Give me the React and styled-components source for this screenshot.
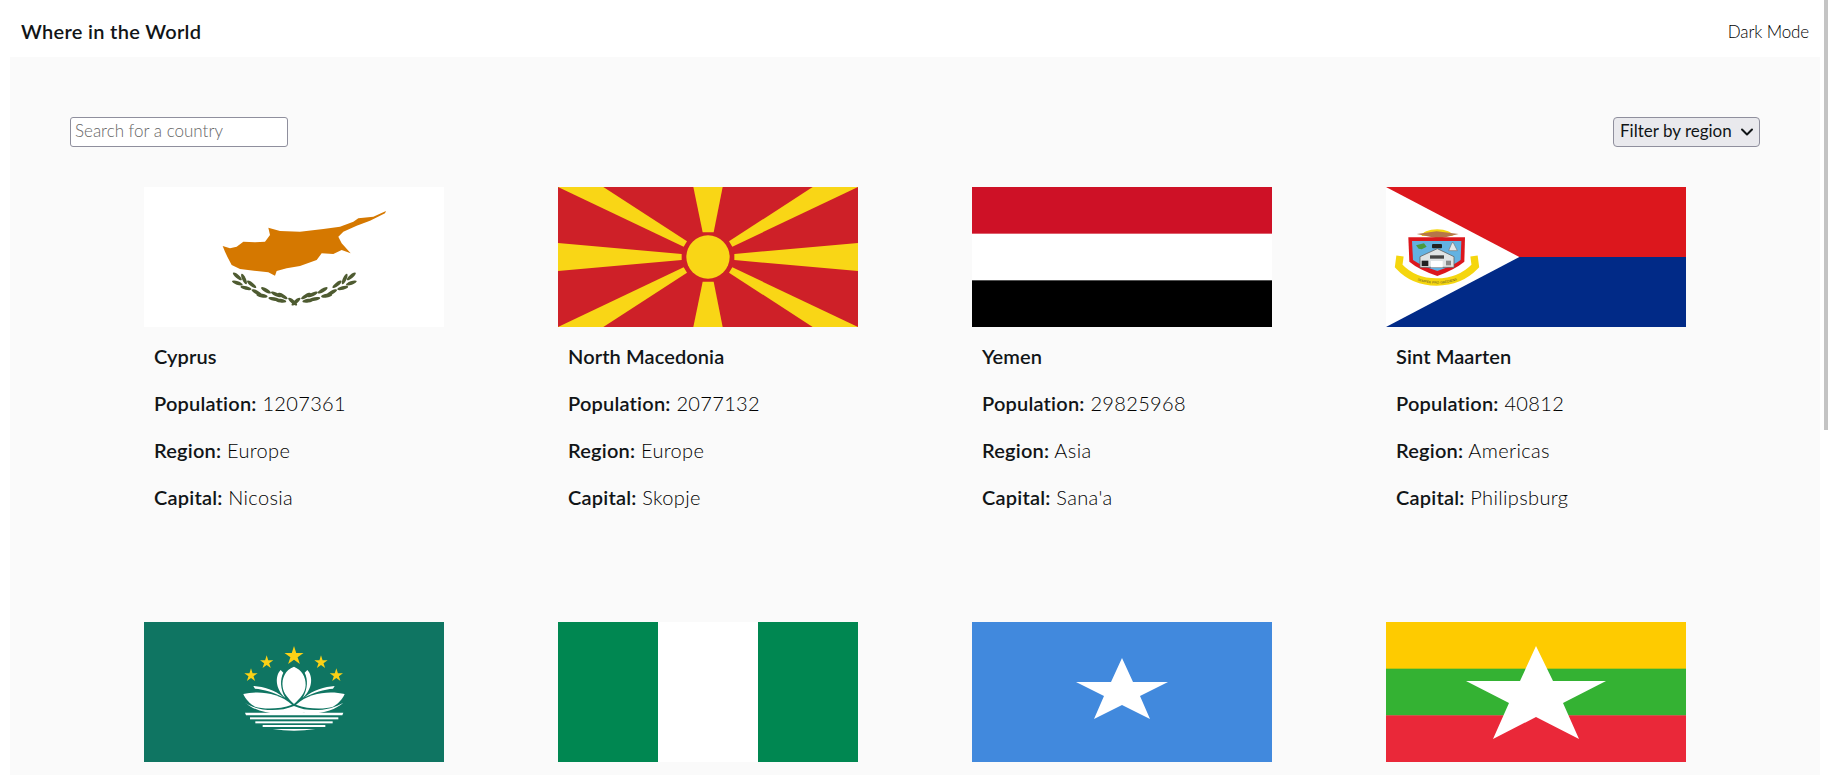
import React from 'react';
import styled, { createGlobalStyle } from 'styled-components';
import { ChevronDown } from 'lucide-react';

const GlobalStyle = createGlobalStyle`
  html, body {
    margin: 0;
    height: 100%;
    overflow: hidden;
    background: #fff;
  }
  body {
    font-family: 'Lato', 'Open Sans', sans-serif;
    color: #111517;
  }
`;

const Page = styled.div`
  margin: 0 10px;
  height: 100vh;
  display: flex;
  flex-direction: column;
`;

const Header = styled.header`
  box-sizing: border-box;
  height: 57px;
  flex: none;
  padding: 5px 11px 0;
  display: flex;
  align-items: center;
  justify-content: space-between;
`;

const Brand = styled.h1`
  margin: 0;
  font-size: 20px;
  font-weight: 600;
  letter-spacing: 0.3px;
`;

const ThemeToggle = styled.span`
  font-size: 17px;
  font-weight: 300;
  color: #000;
  letter-spacing: -0.15px;
`;

const Main = styled.main`
  flex: 1;
  min-height: 0;
  overflow: hidden;
  background: #fafafa;
  padding: 60px;
`;

const Toolbar = styled.div`
  display: flex;
  justify-content: space-between;
  margin-bottom: 40px;
`;

const SearchInput = styled.input`
  box-sizing: border-box;
  width: 218px;
  height: 30px;
  padding: 0 3px 3px 4px;
  border: 1px solid #8f8f9d;
  border-radius: 3px;
  background: #fff;
  font-family: inherit;
  font-size: 17px;
  font-weight: 300;

  &::placeholder {
    color: #666;
    opacity: 1;
  }
`;

const SelectWrap = styled.div`
  position: relative;
  width: 147px;
  height: 30px;

  svg {
    position: absolute;
    right: 3px;
    top: 5px;
    pointer-events: none;
  }
`;

const RegionSelect = styled.select`
  appearance: none;
  box-sizing: border-box;
  width: 100%;
  height: 100%;
  padding: 0 0 3px 6px;
  border: 1px solid #8f8f9d;
  border-radius: 4px;
  background: #e9e9ed;
  color: #111517;
  font-family: inherit;
  font-size: 17px;
  font-weight: 400;
`;

const Grid = styled.div`
  display: grid;
  grid-template-columns: repeat(4, 300px);
  justify-content: center;
  column-gap: 114px;
`;

const Card = styled.article`
  height: 435px;
`;

const Flag = styled.svg`
  display: block;
  width: 300px;
  height: 140px;
`;

const Info = styled.div`
  padding: 16px 10px 0;
`;

const Name = styled.h2`
  margin: 0 0 20px;
  font-size: 20px;
  line-height: 27px;
  font-weight: 600;
  letter-spacing: 0.1px;
`;

const Line = styled.p`
  margin: 0 0 20px;
  font-size: 20px;
  line-height: 27px;
  font-weight: 300;
  color: #000;
  letter-spacing: 0.35px;
`;

const Label = styled.b`
  font-weight: 600;
  color: #111517;
  letter-spacing: 0.2px;
`;

const ScrollThumb = styled.div`
  position: fixed;
  top: 0;
  right: 2px;
  width: 4px;
  height: 430px;
  background: #c4c4c4;
`;

const Cyprus = () => {
  const leaves = [
    [292, 274, 40], [292, 294, 20], [312, 282, 65], [335, 298, 38], [318, 309, 14],
    [350, 322, 28], [378, 316, 30], [366, 332, 10], [408, 328, 25], [402, 342, 10],
    [428, 333, 30], [422, 347, 8], [458, 350, 40],
  ];
  return (
    <Flag viewBox="12 6 900 420">
      <rect x="12" y="6" width="900" height="420" fill="#fff" />
      <path
        fill="#d57800"
        d="M248 183 L270 190 L290 185 L310 170 L345 172 L375 170 L390 150 L385 128 L420 138 L480 140 L550 132 L600 125 L640 110 L655 100 L700 95 L738 78 L735 85 L690 107 L650 122 L610 140 L595 155 L605 175 L632 205 L605 195 L580 207 L545 205 L530 225 L480 243 L440 250 L410 258 L405 272 L385 262 L350 258 L300 252 L275 240 L262 215 L255 200 Z"
      />
      <g fill="#4e5b31">
        {leaves.map(([x, y, r], i) => (
          <ellipse key={i} cx={x} cy={y} rx="17" ry="5.5" transform={`rotate(${r} ${x} ${y})`} />
        ))}
        {leaves.map(([x, y, r], i) => (
          <ellipse key={i} cx={926 - x} cy={y} rx="17" ry="5.5" transform={`rotate(${-r} ${926 - x} ${y})`} />
        ))}
      </g>
    </Flag>
  );
};

const Macedonia = () => (
  <Flag viewBox="24 21 900 420">
    <rect x="24" y="21" width="900" height="420" fill="#ce2028" />
    <g fill="#f9d616">
      <circle cx="474" cy="231" r="65" />
      <polygon points="430,21 518,21 491,157 458,157" />
      <polygon points="458,305 491,305 518,441 430,441" />
      <polygon points="24,189 395,222 395,240 24,273" />
      <polygon points="924,189 553,222 553,240 924,273" />
      <polygon points="24,21 160,21 411,184 401,200" />
      <polygon points="924,21 788,21 537,184 547,200" />
      <polygon points="24,441 160,441 411,278 401,262" />
      <polygon points="924,441 788,441 537,278 547,262" />
    </g>
  </Flag>
);

const Yemen = () => (
  <Flag viewBox="0 0 300 140">
    <rect width="300" height="47" fill="#ce1126" />
    <rect y="46.67" width="300" height="47" fill="#fff" />
    <rect y="93.33" width="300" height="46.67" fill="#000" />
  </Flag>
);

const SintMaarten = () => (
  <Flag viewBox="18 561 900 420">
    <rect x="18" y="561" width="900" height="210" fill="#dc171d" />
    <rect x="18" y="771" width="900" height="210" fill="#012a87" />
    <polygon points="18,561 418,771 18,981" fill="#fff" />
    <path d="M125 708 A46 20 0 0 1 218 708 Z" fill="#f5d60e" />
    <path d="M110 702 L170 694 L236 702 L178 716 Z" fill="#b5764a" />
    <path d="M60 768 L56 798 Q100 846 170 846 Q240 846 286 798 L282 768" fill="none" stroke="#f5d60e" strokeWidth="22" />
    <path id="sxm-motto" d="M52 800 Q100 851 170 851 Q240 851 292 800" fill="none" />
    <text fontFamily="'Liberation Sans', sans-serif" fontSize="10" fill="#5a5230">
      <textPath href="#sxm-motto" startOffset="50%" textAnchor="middle">SEMPER PRO GREDIENS</textPath>
    </text>
    <path d="M85 712 L255 712 L253 785 Q225 808 172 828 Q115 808 88 785 Z" fill="#dc171d" />
    <path d="M96 723 L244 723 L242 780 Q218 798 172 813 Q125 798 99 780 Z" fill="#63b2e2" />
    <path d="M108 736 L132 730 L140 740 L125 748 L116 746 Z" fill="#4a9a3c" />
    <path d="M206 752 L216 728 L220 728 L232 752 Z" fill="#e8e8e8" stroke="#777" strokeWidth="2" />
    <rect x="156" y="732" width="30" height="13" rx="3" fill="#222" />
    <path d="M120 770 L172 746 L222 770 L222 802 L120 802 Z" fill="#dfe3e4" stroke="#666" strokeWidth="2.5" />
    <rect x="150" y="766" width="42" height="10" fill="#444" />
    <rect x="125" y="782" width="20" height="16" fill="#222" />
    <rect x="198" y="782" width="15" height="14" fill="#888" />
    <rect x="153" y="783" width="35" height="19" fill="#fff" />
  </Flag>
);

function Star({ cx, cy, r }) {
  const points = [];
  for (let i = 0; i < 10; i++) {
    const radius = i % 2 === 0 ? r : r * 0.38;
    const angle = (Math.PI / 5) * i - Math.PI / 2;
    points.push(`${cx + radius * Math.cos(angle)},${cy + radius * Math.sin(angle)}`);
  }
  return <polygon points={points.join(' ')} />;
}

const Macau = () => (
  <Flag viewBox="-168 6 900 420">
    <rect x="-168" y="6" width="900" height="420" fill="#0f7562" />
    <g fill="#fbd116">
      <Star cx={282} cy={108} r={30} />
      <Star cx={200} cy={127} r={21} />
      <Star cx={363} cy={127} r={21} />
      <Star cx={153} cy={166} r={21} />
      <Star cx={409} cy={166} r={21} />
    </g>
    <g fill="#fff">
      <path d="M282 140 C255 150 245 175 248 200 C250 220 265 235 282 252 C300 235 316 220 317 195 C318 170 305 150 282 140 Z" />
      <path d="M242 150 C224 168 226 208 256 234 C240 205 240 178 250 158 Z" />
      <path d="M322 150 C340 168 338 208 308 234 C324 205 324 178 314 158 Z" />
      <path d="M130 222 C170 212 235 215 276 254 C240 268 190 268 165 260 C150 252 135 236 130 222 Z" />
      <path d="M434 222 C394 212 329 215 288 254 C324 268 374 268 399 260 C414 252 429 236 434 222 Z" />
      <path d="M160 198 C190 200 225 210 250 232 C225 218 190 208 165 206 Z" />
      <path d="M404 198 C374 200 339 210 314 232 C339 218 374 208 399 206 Z" />
      <path d="M135 248 C165 270 230 280 282 258 C330 280 395 270 430 248 C400 276 330 292 282 270 C240 292 170 278 135 248 Z" />
      <path d="M135 278 L250 278 L282 268 L314 278 L430 278 L427 286 L138 286 Z" />
      <rect x="150" y="292" width="265" height="6" />
      <rect x="166" y="304" width="232" height="6" />
      <rect x="188" y="315" width="188" height="6" />
      <path d="M218 327 L346 327 Q282 337 218 327 Z" />
    </g>
  </Flag>
);

const Nigeria = () => (
  <Flag viewBox="0 0 300 140">
    <rect width="300" height="140" fill="#008751" />
    <rect x="100" width="100" height="140" fill="#fff" />
  </Flag>
);

const Somalia = () => (
  <Flag viewBox="0 0 300 140">
    <rect width="300" height="140" fill="#4189dd" />
    <polygon fill="#fff" points="150,36 161,60 196,60 168,74 178,97 150,83 122,97 132,74 104,60 139,60" />
  </Flag>
);

const Myanmar = () => (
  <Flag viewBox="0 0 300 140">
    <rect width="300" height="47" fill="#fecb00" />
    <rect y="46.67" width="300" height="47" fill="#34b233" />
    <rect y="93.33" width="300" height="46.67" fill="#ea2839" />
    <polygon fill="#fff" points="150,24 167,59 220,59 177,81 193,117 150,95 107,117 123,81 80,59 134,59" />
  </Flag>
);

const countries = [
  { flag: Cyprus, name: 'Cyprus', population: 1207361, region: 'Europe', capital: 'Nicosia' },
  { flag: Macedonia, name: 'North Macedonia', population: 2077132, region: 'Europe', capital: 'Skopje' },
  { flag: Yemen, name: 'Yemen', population: 29825968, region: 'Asia', capital: "Sana'a" },
  { flag: SintMaarten, name: 'Sint Maarten', population: 40812, region: 'Americas', capital: 'Philipsburg' },
  { flag: Macau },
  { flag: Nigeria },
  { flag: Somalia },
  { flag: Myanmar },
];

const App = () => {
  return (
    <>
      <GlobalStyle />
      <Page>
        <Header>
          <Brand>Where in the World</Brand>
          <ThemeToggle>Dark Mode</ThemeToggle>
        </Header>
        <Main>
          <Toolbar>
            <SearchInput placeholder="Search for a country" />
            <SelectWrap>
              <RegionSelect defaultValue="">
                <option value="">Filter by region</option>
              </RegionSelect>
              <ChevronDown size={20} strokeWidth={2.4} />
            </SelectWrap>
          </Toolbar>
          <Grid>
            {countries.map((c, i) => (
              <Card key={i}>
                <c.flag />
                {c.name && (
                  <Info>
                    <Name>{c.name}</Name>
                    <Line><Label>Population:</Label> {c.population}</Line>
                    <Line><Label>Region:</Label> {c.region}</Line>
                    <Line><Label>Capital:</Label> {c.capital}</Line>
                  </Info>
                )}
              </Card>
            ))}
          </Grid>
        </Main>
      </Page>
      <ScrollThumb />
    </>
  );
};

export default App;
